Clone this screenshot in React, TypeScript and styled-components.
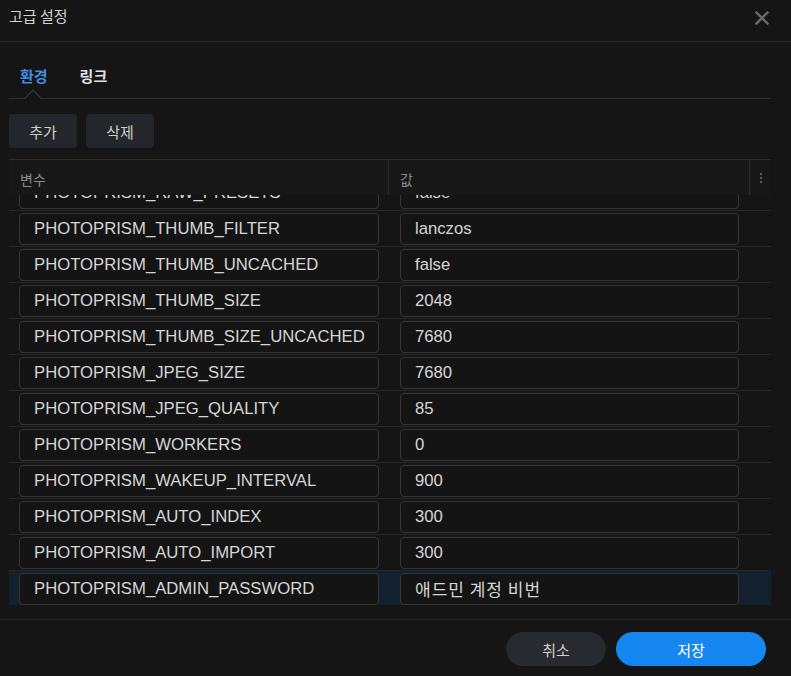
import React from 'react';
import styled, { createGlobalStyle } from 'styled-components';

const GlobalStyle = createGlobalStyle`
	html, body {
		margin: 0;
		padding: 0;
		background: #151515;
	}
	body {
		font-family: "Liberation Sans", "Noto Sans CJK KR", sans-serif;
		color: #d8d8d8;
	}
`;

const Dialog = styled.div`
	width: 791px;
	height: 676px;
	display: flex;
	flex-direction: column;
	background: #151515;
	overflow: hidden;
	& > * {
		flex-shrink: 0;
	}
`;

const Header = styled.div`
	height: 42px;
	display: flex;
	align-items: flex-start;
	justify-content: space-between;
	padding: 5px 22px 0 9px;
	border-bottom: 1px solid #2a2a2a;
	box-sizing: border-box;
`;

const Title = styled.div`
	font-family: "Noto Sans CJK KR", sans-serif;
	font-size: 15px;
	line-height: 22px;
	color: #d2d2d2;
`;

const Close = styled.button`
	background: none;
	border: none;
	padding: 0;
	margin-top: 6px;
	display: flex;
	cursor: pointer;
`;

const Body = styled.div`
	display: flex;
	flex-direction: column;
	padding: 0 20px 0 9px;
	& > * {
		flex-shrink: 0;
	}
`;

const Tabs = styled.div`
	height: 57px;
	display: flex;
	align-items: flex-end;
	gap: 32px;
	padding-left: 11px;
	border-bottom: 1px solid #2e2e2e;
	box-sizing: border-box;
`;

const Tab = styled.div<{ $active?: boolean }>`
	position: relative;
	height: 33px;
	font-family: "Noto Sans CJK KR", sans-serif;
	font-size: 15px;
	font-weight: 700;
	color: ${p => (p.$active ? '#3f8fe4' : '#e2e2e2')};
	${p => p.$active && `
		&::after {
			content: '';
			position: absolute;
			left: 50%;
			bottom: -6px;
			width: 11px;
			height: 11px;
			margin-left: -7px;
			background: #151515;
			border-top: 1px solid #3a3a3a;
			border-left: 1px solid #3a3a3a;
			transform: rotate(45deg);
		}
	`}
`;

const Toolbar = styled.div`
	display: flex;
	gap: 9px;
	margin-top: 15px;
`;

const ToolButton = styled.button`
	height: 34px;
	width: 68px;
	border: none;
	border-radius: 4px;
	background: #23272b;
	color: #cfcfcf;
	font-family: "Noto Sans CJK KR", sans-serif;
	font-size: 15px;
	cursor: pointer;
`;

const Table = styled.div`
	margin-top: 11px;
	border-top: 1px solid #2c2c2c;
	display: flex;
	flex-direction: column;
`;

const HeadRow = styled.div`
	height: 35px;
	display: grid;
	grid-template-columns: 380px 361px 21px;
	background: #171717;
`;

const HeadCell = styled.div<{ $divider?: boolean }>`
	display: flex;
	align-items: center;
	padding-left: 11px;
	font-family: "Noto Sans CJK KR", sans-serif;
	font-size: 14px;
	color: #8c8c8c;
	border-right: ${p => (p.$divider ? '1px solid #2c2c2c' : 'none')};
	padding-top: 2px;
`;

const Kebab = styled.div`
	display: flex;
	flex-direction: column;
	align-items: center;
	justify-content: center;
	gap: 2px;
	span {
		width: 2px;
		height: 2px;
		background: #5e5e5e;
	}
`;

const Viewport = styled.div`
	height: 410px;
	overflow: hidden;
`;

const Scroller = styled.div<{ $offset: number }>`
	margin-top: -${p => p.$offset}px;
`;

const Row = styled.div<{ $selected?: boolean }>`
	height: 36px;
	display: grid;
	grid-template-columns: 380px 361px 21px;
	border-bottom: 1px solid #262626;
	box-sizing: border-box;
	background: ${p => (p.$selected ? '#13202e' : 'transparent')};
`;

const Cell = styled.div<{ $left: number; $right: number }>`
	display: flex;
	align-items: center;
	padding: 0 ${p => p.$right}px 0 ${p => p.$left}px;
`;

const Field = styled.div<{ $korean?: boolean }>`
	flex: 1;
	height: 32px;
	box-sizing: border-box;
	border: 1px solid #353535;
	border-radius: 4px;
	background: #141414;
	display: flex;
	align-items: center;
	padding-left: 14px;
	font-family: ${p => (p.$korean ? '"Noto Sans CJK KR", sans-serif' : 'inherit')};
	font-size: ${p => (p.$korean ? '17px' : '16.7px')};
	letter-spacing: ${p => (p.$korean ? '1px' : 'normal')};
	color: #d6d6d6;
	white-space: nowrap;
	overflow: hidden;
`;

const Footer = styled.div`
	height: 56px;
	margin-top: 14px;
	border-top: 1px solid #262626;
	display: flex;
	align-items: flex-start;
	justify-content: flex-end;
	gap: 10px;
	padding: 12px 25px 0 0;
`;

const PillButton = styled.button<{ $primary?: boolean }>`
	height: 34px;
	width: ${p => (p.$primary ? '150px' : '100px')};
	border: none;
	border-radius: 17px;
	background: ${p => (p.$primary ? '#1686f0' : '#272a2e')};
	color: ${p => (p.$primary ? '#ffffff' : '#d0d0d0')};
	font-family: "Noto Sans CJK KR", sans-serif;
	font-size: 15px;
	cursor: pointer;
`;

const rows: [string, string][] = [
	['PHOTOPRISM_RAW_PRESETS', 'false'],
	['PHOTOPRISM_THUMB_FILTER', 'lanczos'],
	['PHOTOPRISM_THUMB_UNCACHED', 'false'],
	['PHOTOPRISM_THUMB_SIZE', '2048'],
	['PHOTOPRISM_THUMB_SIZE_UNCACHED', '7680'],
	['PHOTOPRISM_JPEG_SIZE', '7680'],
	['PHOTOPRISM_JPEG_QUALITY', '85'],
	['PHOTOPRISM_WORKERS', '0'],
	['PHOTOPRISM_WAKEUP_INTERVAL', '900'],
	['PHOTOPRISM_AUTO_INDEX', '300'],
	['PHOTOPRISM_AUTO_IMPORT', '300'],
	['PHOTOPRISM_ADMIN_PASSWORD', '애드민 계정 비번'],
];

export default function App() {
	return (
		<>
			<GlobalStyle />
			<Dialog>
				<Header>
					<Title>고급 설정</Title>
					<Close aria-label="close">
						<svg width="14" height="14" viewBox="0 0 14 14">
							<path d="M1.5 1.5 L12.5 12.5 M12.5 1.5 L1.5 12.5" stroke="#6a6a6a" strokeWidth="2.4" strokeLinecap="square" />
						</svg>
					</Close>
				</Header>
				<Body>
					<Tabs>
						<Tab $active>환경</Tab>
						<Tab>링크</Tab>
					</Tabs>
					<Toolbar>
						<ToolButton>추가</ToolButton>
						<ToolButton>삭제</ToolButton>
					</Toolbar>
					<Table>
						<HeadRow>
							<HeadCell $divider>변수</HeadCell>
							<HeadCell $divider>값</HeadCell>
							<Kebab><span /><span /><span /></Kebab>
						</HeadRow>
						<Viewport>
							<Scroller $offset={20}>
								{rows.map(([name, value], i) => (
									<Row key={name} $selected={i === rows.length - 1}>
										<Cell $left={10} $right={10}><Field>{name}</Field></Cell>
										<Cell $left={11} $right={11}>
											<Field $korean={/[가-힣]/.test(value)}>{value}</Field>
										</Cell>
										<div />
									</Row>
								))}
							</Scroller>
						</Viewport>
					</Table>
				</Body>
				<Footer>
					<PillButton>취소</PillButton>
					<PillButton $primary>저장</PillButton>
				</Footer>
			</Dialog>
		</>
	);
}
